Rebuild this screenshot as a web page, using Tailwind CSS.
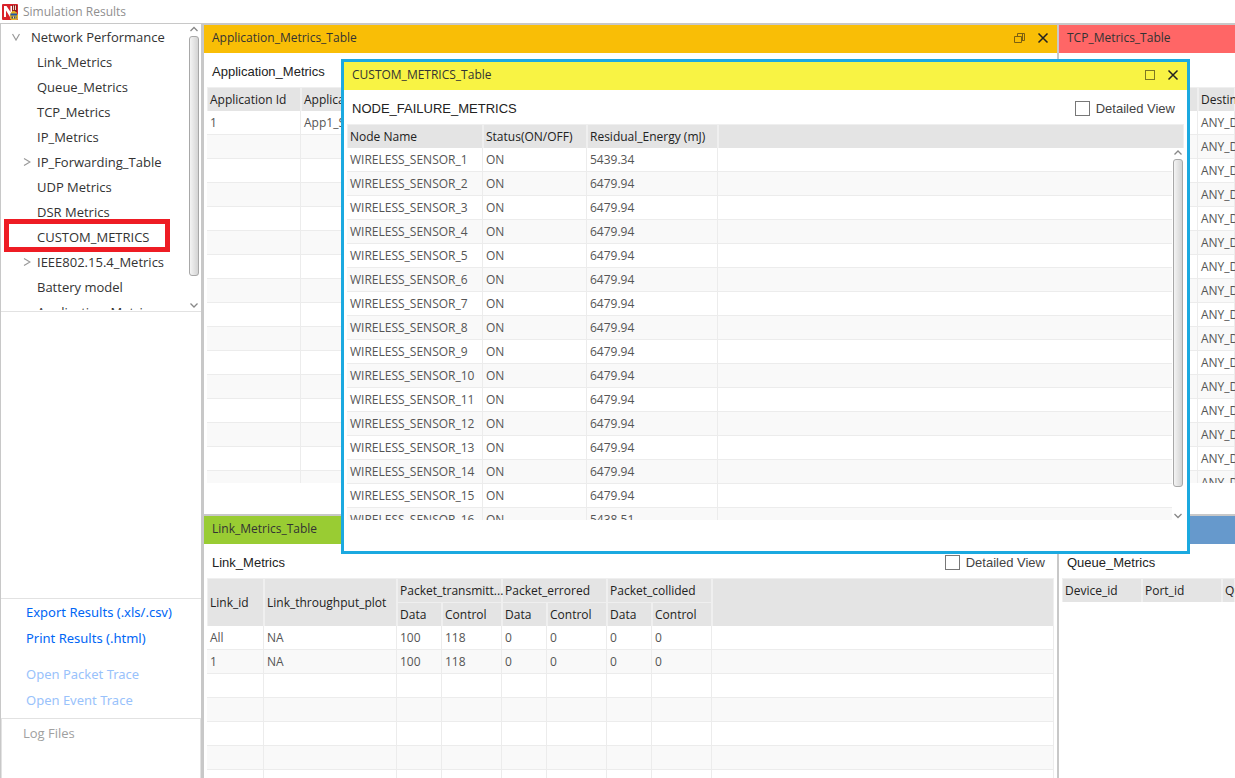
<!DOCTYPE html>
<html lang="en">
<head>
<meta charset="utf-8">
<title>Simulation Results</title>
<script src="https://cdn.jsdelivr.net/npm/@tailwindcss/browser@4"></script>
</head>
<body class="h-screen overflow-hidden bg-white flex flex-col font-['Open_Sans','Noto_Sans',sans-serif] text-xs text-[#333]">

<header class="h-[23px] shrink-0 flex items-center gap-[5px] pl-[2px] text-[#8f8f8f]">
  <svg class="w-4 h-4" viewBox="0 0 16 16" aria-hidden="true">
    <rect width="16" height="16" rx="1" fill="#d9222a"/>
    <path d="M2 2h2.500l4 6V2H10v11H8L4 6.500V13H2z" fill="#fff"/>
    <path d="M10 1h5v7h-5z" fill="#8c1c20"/><path d="M11 1.500h1V6h-1zM13 1.500h1V6h-1z" fill="#f0d9c8"/>
    <path d="M9 8.500Q11.500 5 14.500 8.500L16 11v3.500L14.500 16h-5L8 14.500V11z" fill="#e3b322"/>
    <path d="M8.500 9.500h6.500v2H8.500z" fill="#1f56a8"/><path d="M9.500 12.500h5v2h-5z" fill="#3a4a6a"/><path d="M11 12.500h1v2h-1zM13 12.500h.5v2H13z" fill="#f4e6a0"/>
  </svg>
  <h1>Simulation Results</h1>
</header>

<div class="flex-1 min-h-0 flex">
  <aside class="w-[204px] shrink-0 flex flex-col border-l border-l-[#c8c8c8] border-r-[3px] border-r-[#c8c8c8] border-t border-t-[#c8c8c8]">
    <nav class="relative h-[288px] shrink-0 border-b border-[#e2e2e2] flex justify-between pr-[2px]">
      <ul id="tree" class="h-[286px] pt-px overflow-hidden flex-1 text-[13px]"></ul>
      <div class="w-[10px] shrink-0 flex flex-col items-center" aria-hidden="true">
        <svg class="w-2 h-3 shrink-0" viewBox="0 0 8 12"><path d="M0.500 7L4 3.500L7.500 7" fill="none" stroke="#888" stroke-width="1.300"/></svg>
        <div class="w-[10px] flex-1 rounded-[3px] border border-[#a8a8a8] bg-linear-to-r from-[#f4f4f4] to-[#d4d4d4]"></div>
        <svg class="w-2 h-[35px] shrink-0" viewBox="0 0 8 35"><path d="M0.500 27.500L4 31L7.500 27.500" fill="none" stroke="#888" stroke-width="1.300"/></svg>
      </div>
      <div class="absolute left-[3px] top-[195px] w-[166px] h-[33px] border-[5px] border-[#ee1c24]"></div>
    </nav>
    <div class="flex-1"></div>
    <div class="border-t border-[#e2e2e2] h-[120px] shrink-0 pl-[25px] flex flex-col items-start text-[13px] leading-[26px] font-['Noto_Sans','Open_Sans',sans-serif] text-[#0066f5]">
      <a href="#export">Export Results (.xls/.csv)</a>
      <a href="#print">Print Results (.html)</a>
      <a href="#packet" class="mt-[10px] text-[#99c2fb]">Open Packet Trace</a>
      <a href="#event" class="text-[#99c2fb]">Open Event Trace</a>
    </div>
    <div class="h-[60px] shrink-0 border-t border-x border-[#e2e2e2] pl-[21px] pt-1 text-[13px] leading-5 text-[#a0a0a0]">Log Files</div>
  </aside>

  <main class="flex-1 min-w-0 grid grid-cols-[minmax(0,1fr)_176px] grid-rows-[minmax(0,489fr)_minmax(0,262fr)] gap-[2px] pt-[2px] bg-[#c8c8c8]">
    <section class="bg-white overflow-hidden">
      <div class="h-7 bg-[#f9be06] flex items-center px-2 pb-[2px]">
        <h2 class="flex-1">Application_Metrics_Table</h2>
        <button class="w-[23px]" aria-label="Restore"><svg class="w-[11px] h-[11px]" viewBox="0 0 11 11" fill="none" stroke="#7d6010"><path d="M0.500 3.500h7v6h-7zM3.500 3.500v-3h7v7h-3M8.500 0.500v7"/></svg></button>
        <button aria-label="Close"><svg class="w-3 h-3" viewBox="0 0 12 12"><path d="M1.500 1.500l9 9M10.500 1.500l-9 9" stroke="#222" stroke-width="1.500"/></svg></button>
      </div>
      <div class="h-[34px] flex items-center px-2 pt-1 font-['Liberation_Sans',sans-serif] text-[13px] text-[#222]"><h3>Application_Metrics</h3></div>
      <div class="pl-[3px] h-[396px] overflow-hidden" id="app"></div>
    </section>

    <section class="bg-white overflow-hidden">
      <div class="h-7 bg-[#ff6666] flex items-center px-2 pb-[2px]"><h2>TCP_Metrics_Table</h2></div>
      <div class="h-[34px]"></div>
      <div class="pl-[3px] h-[396px] overflow-hidden" id="tcp"></div>
    </section>

    <section class="bg-white overflow-hidden">
      <div class="h-7 bg-[#99cc33] flex items-center px-2 pb-[2px]"><h2>Link_Metrics_Table</h2></div>
      <div class="h-[34px] flex items-center justify-between pl-2 pr-3 pt-1 font-['Liberation_Sans',sans-serif] text-[13px] text-[#222]">
        <h3>Link_Metrics</h3>
        <label class="flex items-center gap-[6px] text-[#444]"><input type="checkbox" class="appearance-none w-[15px] h-[15px] border border-[#777] bg-white">Detailed View</label>
      </div>
      <div class="pl-[3px] pr-[3px]">
        <table class="w-full table-fixed border-separate border-spacing-0">
          <colgroup><col class="w-[57px]"><col class="w-[133px]"><col class="w-[45px]"><col class="w-[60px]"><col class="w-[45px]"><col class="w-[60px]"><col class="w-[45px]"><col class="w-[60px]"><col></colgroup>
          <thead id="linkHead" class="text-left">
            <tr class="h-6">
              <th rowspan="2">Link_id</th><th rowspan="2">Link_throughput_plot</th><th colspan="2">Packet_transmitt...</th><th colspan="2">Packet_errored</th><th colspan="2">Packet_collided</th><th rowspan="2"></th>
            </tr>
            <tr class="h-6"><th>Data</th><th>Control</th><th>Data</th><th>Control</th><th>Data</th><th>Control</th></tr>
          </thead>
          <tbody id="linkBody"></tbody>
        </table>
      </div>
    </section>

    <section class="bg-white overflow-hidden">
      <div class="h-7 bg-[#6699cc]"></div>
      <div class="h-[34px] flex items-center px-2 pt-1 font-['Liberation_Sans',sans-serif] text-[13px] text-[#222]"><h3>Queue_Metrics</h3></div>
      <div class="pl-[3px]" id="queue"></div>
    </section>
  </main>
</div>

<!-- floating metrics window -->
<section role="dialog" aria-label="CUSTOM_METRICS_Table" class="absolute left-[341px] top-[59px] w-[849px] h-[495px] border-[3px] border-[#1ba9e0] bg-white">
  <div class="h-7 bg-[#f8f344] flex items-center px-2 pb-[2px]">
    <h2 class="flex-1">CUSTOM_METRICS_Table</h2>
    <button class="w-[23px]" aria-label="Maximize"><svg class="w-[11px] h-[11px]" viewBox="0 0 11 11" fill="none" stroke="#7c7822"><rect x="1.500" y="0.500" width="9" height="9"/></svg></button>
    <button aria-label="Close"><svg class="w-3 h-3" viewBox="0 0 12 12"><path d="M1.500 1.500l9 9M10.500 1.500l-9 9" stroke="#222" stroke-width="1.500"/></svg></button>
  </div>
  <div class="h-[34px] flex items-center justify-between pl-2 pr-3 pt-1 font-['Liberation_Sans',sans-serif] text-[13px] text-[#222]">
    <h3>NODE_FAILURE_METRICS</h3>
    <label class="flex items-center gap-[6px] text-[#444]"><input type="checkbox" class="appearance-none w-[15px] h-[15px] border border-[#777] bg-white">Detailed View</label>
  </div>
  <div class="px-[3px]">
    <div class="relative h-[396px] overflow-hidden" id="nodes">
      <div class="absolute right-0 top-6 bottom-0 w-3 bg-white flex flex-col items-center" aria-hidden="true">
        <svg class="w-2 h-[11px] shrink-0" viewBox="0 0 8 11"><path d="M0.500 6.500L4 3L7.500 6.500" fill="none" stroke="#888" stroke-width="1.300"/></svg>
        <div class="w-[10px] flex-1 rounded-[3px] border border-[#a8a8a8] bg-linear-to-r from-[#f4f4f4] to-[#d4d4d4]"></div>
        <svg class="w-2 h-[33px] shrink-0" viewBox="0 0 8 33"><path d="M0.500 27L4 30.500L7.500 27" fill="none" stroke="#888" stroke-width="1.300"/></svg>
      </div>
    </div>
  </div>
</section>

<script>
const TH = 'h-6 p-0 pl-[2px] border border-[#efefef] border-b-0 bg-[#e4e4e4] font-normal text-left text-[#222] whitespace-nowrap';
const TD = 'h-6 p-0 pl-[3px] border-b border-r border-[#ececec] text-[#555] whitespace-nowrap';
const rowHtml = (cells, i) => `<tr class="${i % 2 ? 'bg-[#f9f9f9]' : 'bg-white'}">${cells.map(c => `<td class="${TD}">${c}</td>`).join('')}</tr>`;

function table(id, widths, heads, rows) {
  const cols = widths.map(w => w ? `<col style="width:${w}px">` : '<col>').join('');
  document.getElementById(id).insertAdjacentHTML('afterbegin',
    `<table class="w-full table-fixed border-separate border-spacing-0"><colgroup>${cols}</colgroup>
     <thead><tr>${heads.map(h => `<th class="${TH}">${h}</th>`).join('')}</tr></thead>
     <tbody>${rows.map(rowHtml).join('')}</tbody></table>`);
}

table('app', [94, 130, 0], ['Application Id', 'Application Name', ''],
  Array.from({length: 16}, (_, i) => i ? ['', '', ''] : ['1', 'App1_SENSOR_APP', '']));
table('tcp', [136, 0], ['', 'Destination'], Array.from({length: 16}, () => ['', 'ANY_DEVICE']));
table('queue', [80, 80, 0], ['Device_id', 'Port_id', 'Queued_packet'], []);
table('nodes', [136, 104, 131, 0], ['Node Name', 'Status(ON/OFF)', 'Residual_Energy (mJ)', ''],
  Array.from({length: 16}, (_, i) => ['WIRELESS_SENSOR_' + (i + 1), 'ON', i === 0 ? '5439.34' : i === 15 ? '5438.51' : '6479.94', '']));

document.querySelectorAll('#linkHead th').forEach(th => th.className = TH);
document.getElementById('linkBody').innerHTML = [
  ['All', 'NA', '100', '118', '0', '0', '0', '0', ''],
  ['1', 'NA', '100', '118', '0', '0', '0', '0', ''],
  ...Array.from({length: 5}, () => Array(9).fill(''))
].map(rowHtml).join('');

const DOWN = '<svg class="w-2 h-2" viewBox="0 0 8 8"><path d="M0.500 1L4 7L7.500 1" fill="none" stroke="#999" stroke-width="1.200"/></svg>';
const RIGHT = '<svg class="w-2 h-2" viewBox="0 0 8 8"><path d="M1 0.500L7 4L1 7.500" fill="none" stroke="#999" stroke-width="1.200"/></svg>';
document.getElementById('tree').innerHTML = [
  ['Network Performance', DOWN, 1], ['Link_Metrics'], ['Queue_Metrics'], ['TCP_Metrics'], ['IP_Metrics'],
  ['IP_Forwarding_Table', RIGHT], ['UDP Metrics'], ['DSR Metrics'], ['CUSTOM_METRICS'],
  ['IEEE802.15.4_Metrics', RIGHT], ['Battery model'], ['Application_Metrics']
].map(([name, icon = '', root]) =>
  `<li class="h-[25px] flex items-center whitespace-nowrap ${root ? 'pl-[11px]' : 'pl-[22px]'}"><span class="shrink-0 pb-[2px] ${root ? 'w-[19px]' : 'w-[14px]'}">${icon}</span>${name}</li>`).join('');
</script>
</body>
</html>
